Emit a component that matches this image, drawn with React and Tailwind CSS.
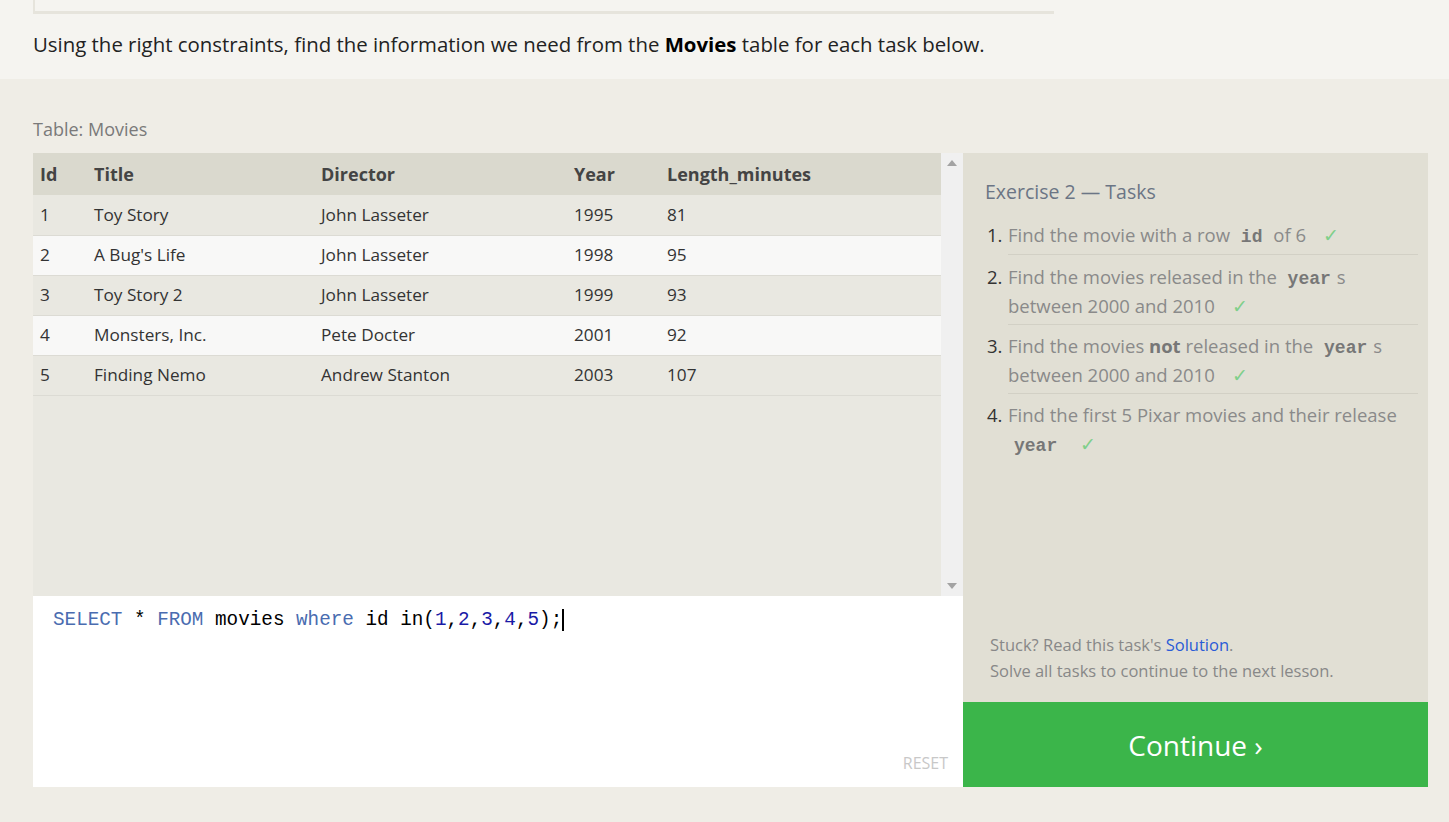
const movies = [
  { id: 1, title: 'Toy Story', director: 'John Lasseter', year: 1995, length: 81 },
  { id: 2, title: "A Bug's Life", director: 'John Lasseter', year: 1998, length: 95 },
  { id: 3, title: 'Toy Story 2', director: 'John Lasseter', year: 1999, length: 93 },
  { id: 4, title: 'Monsters, Inc.', director: 'Pete Docter', year: 2001, length: 92 },
  { id: 5, title: 'Finding Nemo', director: 'Andrew Stanton', year: 2003, length: 107 },
];

const font = { fontFamily: '"Open Sans", "Noto Sans", sans-serif' };

function Code({ children }) {
  return (
    <span className="font-bold text-[#777] px-[6px] text-[18px] leading-none" style={{ fontFamily: '"Liberation Mono", monospace' }}>
      {children}
    </span>
  );
}

function Check() {
  return <span className="text-[#7fcf8a] ml-3">✓</span>;
}

export default function App() {
  return (
    <div className="min-h-[822px] bg-[#efede6]" style={font}>
      <div className="bg-[#f5f4f0] pb-[20px]">
        <div className="ml-[33px] w-[1021px] h-[14px] border-l-2 border-b-[3px] border-[#e6e4dc]" />
        <p className="pl-[33px] pt-[15px] text-[20.4px] text-[#222] leading-[30px]">
          Using the right constraints, find the information we need from the <b className="text-black">Movies</b> table for each task below.
        </p>
      </div>

      <div className="pl-[33px] pr-[21px] pt-[36px]">
        <div className="text-[18px] text-[#7a7a7a] leading-[28px] mb-[10px]">Table: Movies</div>
        <div className="flex">
          <div className="w-[930px] flex flex-col">
            <div className="flex h-[443px] bg-[#e9e8e1]">
              <div className="flex-1">
                <table className="w-full text-left border-collapse">
                  <thead>
                    <tr className="bg-[#dad9ce] h-[42px] text-[18px] text-[#444]">
                      <th className="pl-[7px] w-[61px] font-bold">Id</th>
                      <th className="w-[227px] font-bold">Title</th>
                      <th className="w-[253px] font-bold">Director</th>
                      <th className="w-[93px] font-bold">Year</th>
                      <th className="font-bold">Length_minutes</th>
                    </tr>
                  </thead>
                  <tbody>
                    {movies.map((m, i) => (
                      <tr
                        key={m.id}
                        className={`h-[40px] text-[17.2px] text-[#333] border-b border-[#dcdbd4] ${i % 2 ? 'bg-[#f8f8f7]' : 'bg-[#e9e8e1]'}`}
                      >
                        <td className="pl-[7px]">{m.id}</td>
                        <td>{m.title}</td>
                        <td>{m.director}</td>
                        <td>{m.year}</td>
                        <td>{m.length}</td>
                      </tr>
                    ))}
                  </tbody>
                </table>
              </div>
              <div className="w-[22px] bg-[#f0f0f0] flex flex-col justify-between items-center py-[7px]">
                <svg width="10" height="6" viewBox="0 0 10 6"><path d="M5 0 L10 6 L0 6 Z" fill="#a3a3a3" /></svg>
                <svg width="10" height="6" viewBox="0 0 10 6"><path d="M0 0 L10 0 L5 6 Z" fill="#a3a3a3" /></svg>
              </div>
            </div>
            <div className="h-[191px] bg-white relative">
              <div className="pl-[20px] pt-[10px] text-[19.3px] leading-[28px]" style={{ fontFamily: '"Liberation Mono", monospace' }}>
                <span className="text-[#4a6cb0]">SELECT</span> * <span className="text-[#4a6cb0]">FROM</span> movies{' '}
                <span className="text-[#4a6cb0]">where</span> id in(
                <span className="text-[#1a1aa6]">1</span>,<span className="text-[#1a1aa6]">2</span>,<span className="text-[#1a1aa6]">3</span>,<span className="text-[#1a1aa6]">4</span>,<span className="text-[#1a1aa6]">5</span>);
                <span className="inline-block w-[2px] h-[22px] bg-black align-middle" />
              </div>
              <div className="absolute right-[15px] bottom-[12px] text-[16px] text-[#c8c8c8]">RESET</div>
            </div>
          </div>

          <div className="w-[465px] flex flex-col">
            <div className="flex-1 bg-[#e1dfd4] pl-[22px] pr-[10px] pt-[24px] flex flex-col">
              <div className="text-[19.5px] text-[#6b7585] leading-[30px] mb-[13px]">Exercise 2 — Tasks</div>
              <ol className="text-[18.5px] leading-[29px] text-[#8a8a8a]">
                <li className="flex">
                  <span className="w-[23px] pl-[2px] text-[#333]">1.</span>
                  <span className="flex-1 border-b border-[#d2d0c5] pb-[5px]">
                    Find the movie with a row <Code>id</Code> of 6 <Check />
                  </span>
                </li>
                <li className="flex pt-[7px]">
                  <span className="w-[23px] pl-[2px] text-[#333]">2.</span>
                  <span className="flex-1 border-b border-[#d2d0c5] pb-[4px]">
                    Find the movies released in the <Code>year</Code>s between 2000 and 2010 <Check />
                  </span>
                </li>
                <li className="flex pt-[6px]">
                  <span className="w-[23px] pl-[2px] text-[#333]">3.</span>
                  <span className="flex-1 border-b border-[#d2d0c5] pb-[4px]">
                    Find the movies <b className="text-[#777]">not</b> released in the <Code>year</Code>s between 2000 and 2010 <Check />
                  </span>
                </li>
                <li className="flex pt-[6px]">
                  <span className="w-[23px] pl-[2px] text-[#333]">4.</span>
                  <span className="flex-1">
                    Find the first 5 Pixar movies and their release <Code>year</Code> <Check />
                  </span>
                </li>
              </ol>
              <div className="mt-auto pb-[18px] pl-[5px] text-[16.5px] leading-[26px] text-[#888]">
                <div>
                  Stuck? Read this task's <span className="text-[#2a5bd7]">Solution</span>.
                </div>
                <div>Solve all tasks to continue to the next lesson.</div>
              </div>
            </div>
            <div className="h-[85px] bg-[#3bb54a] flex items-center justify-center text-white text-[28px]">
              Continue ›
            </div>
          </div>
        </div>
      </div>
    </div>
  );
}
